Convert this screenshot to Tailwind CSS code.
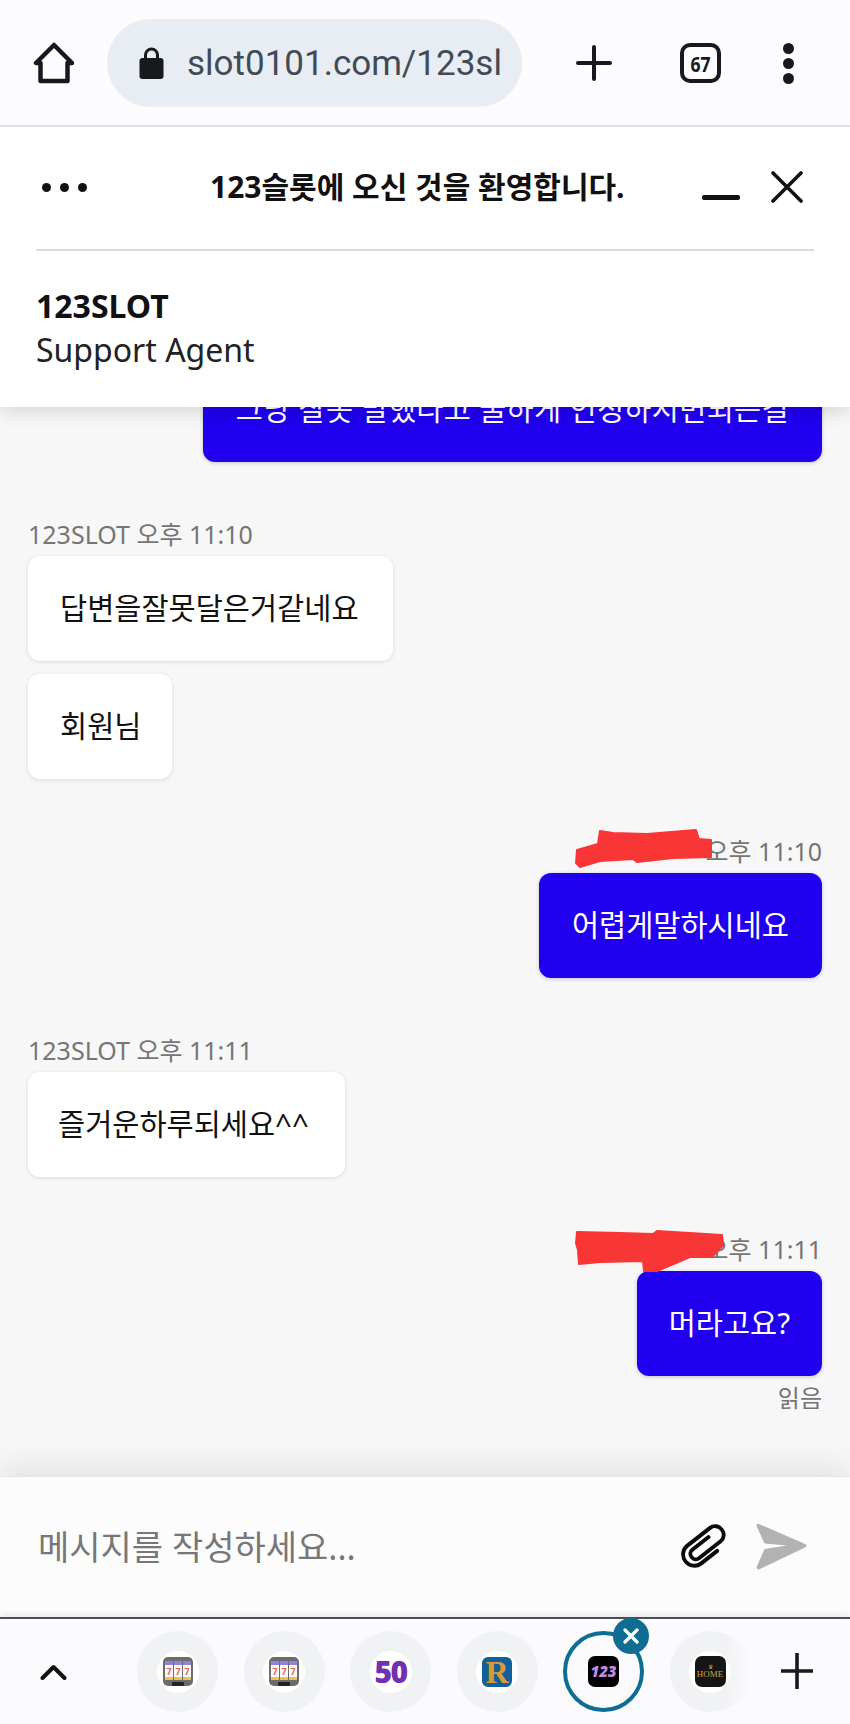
<!DOCTYPE html>
<html lang="ko">
<head>
  <meta charset="utf-8">
  <meta name="viewport" content="width=device-width, initial-scale=1.0">
  <title>123SLOT</title>
  <script src="https://cdn.jsdelivr.net/npm/@tailwindcss/browser@4"></script>
</head>
<body class="font-['Noto_Sans','Noto_Sans_CJK_KR',sans-serif] bg-white">
  <div class="w-[850px] h-[1724px] flex flex-col overflow-hidden text-[#111]">

    <!-- Browser toolbar -->
    <div class="h-[127px] shrink-0 flex items-center bg-[#fcfcfe] border-b-2 border-[#dfe3e8] pl-[33px] pt-[1px] relative z-20">
      <svg class="w-[42px] h-[42px]" viewBox="0 0 42 42" fill="none" stroke="#17191c" stroke-width="4.5" stroke-linejoin="round" stroke-linecap="round">
        <path d="M21 3 L3 21 H7.5 V39 H34.5 V21 H39 Z"/>
      </svg>
      <div class="ml-[32px] w-[415px] h-[88px] rounded-full bg-[#e7edf3] flex items-center pl-[32px] overflow-hidden">
        <svg class="w-[25px] h-[32px] shrink-0" viewBox="0 0 25 32">
          <path d="M6.5 13 V8 a6 6 0 0 1 12 0 V13" fill="none" stroke="#17191c" stroke-width="3"/>
          <rect x="0.5" y="11" width="24" height="21" rx="3" fill="#17191c"/>
        </svg>
        <span class="ml-[23px] font-['Roboto',sans-serif] text-[35px] leading-none text-[#414a55] whitespace-nowrap">slot0101.com/123sl</span>
      </div>
      <svg class="ml-[54px] w-[36px] h-[36px]" viewBox="0 0 36 36" stroke="#17191c" stroke-width="4" stroke-linecap="round"><path d="M18 2 V34 M2 18 H34"/></svg>
      <div class="ml-[68px] w-[41px] h-[40px] rounded-[10px] border-[4px] border-[#17191c] flex items-center justify-center">
        <span class="text-[22px] font-bold leading-none scale-x-80 text-[#17191c]">67</span>
      </div>
      <div class="ml-[62px] flex flex-col gap-[4px]">
        <span class="w-[11px] h-[11px] rounded-full bg-[#17191c]"></span>
        <span class="w-[11px] h-[11px] rounded-full bg-[#17191c]"></span>
        <span class="w-[11px] h-[11px] rounded-full bg-[#17191c]"></span>
      </div>
    </div>

    <!-- Chat header -->
    <div class="h-[280px] shrink-0 bg-white px-[36px] flex flex-col shadow-[0_4px_18px_rgba(0,0,0,0.14)] relative z-10">
      <div class="h-[124px] shrink-0 flex items-center border-b-2 border-[#dcdcdc] pb-[2px]">
        <div class="ml-[6px] flex gap-[9px]">
          <span class="w-[9px] h-[9px] rounded-full bg-[#111]"></span>
          <span class="w-[9px] h-[9px] rounded-full bg-[#111]"></span>
          <span class="w-[9px] h-[9px] rounded-full bg-[#111]"></span>
        </div>
        <div class="ml-[123px] w-[480px] text-[30px] font-bold leading-none whitespace-nowrap">123슬롯에 오신 것을 환영합니다.</div>
        <svg class="ml-[12px] mt-[22px] w-[38px] h-[6px]" viewBox="0 0 38 6"><rect width="38" height="5" rx="2" fill="#111"/></svg>
        <svg class="ml-[31px] w-[32px] h-[32px]" viewBox="0 0 32 32" stroke="#111" stroke-width="3.6" stroke-linecap="round"><path d="M2 2 L30 30 M30 2 L2 30"/></svg>
      </div>
      <div class="mt-[33px] text-[32px] font-bold leading-[44px]">123SLOT</div>
      <div class="text-[32px] leading-[44px] text-[#222]">Support Agent</div>
    </div>

    <!-- Messages -->
    <div class="flex-1 min-h-0 overflow-hidden bg-[#f7f7f8] flex flex-col justify-end pl-[28px] pr-[28px] pb-[62px] text-[29.5px]">
      <div class="self-end shrink-0 h-[105px] rounded-[12px] bg-[#2000ef] text-white px-[33px] flex items-center whitespace-nowrap tracking-[0.3px] shadow-[0_1px_4px_rgba(0,0,0,0.2)]">그냥 잘못 말했다고 쿨하게 인정하시면되는걸</div>

      <div class="mt-[56px] shrink-0 h-[32px] text-[25px] leading-[32px] text-[#757575]">123SLOT 오후 11:10</div>
      <div class="mt-[6px] shrink-0 self-start h-[105px] rounded-[12px] bg-white pl-[32px] pr-[34px] flex items-center shadow-[0_1px_4px_rgba(0,0,0,0.12)]">답변을잘못달은거같네요</div>
      <div class="mt-[13px] shrink-0 self-start h-[105px] rounded-[12px] bg-white pl-[32px] pr-[31px] flex items-center shadow-[0_1px_4px_rgba(0,0,0,0.12)]">회원님</div>

      <div class="mt-[56px] shrink-0 h-[32px] text-[25px] leading-[32px] text-[#757575] text-right relative">
        <svg class="absolute right-[110px] top-[-6px] w-[137px] h-[39px]" viewBox="0 0 137 39"><path fill="#f93636" stroke="#f93636" stroke-width="2" stroke-linejoin="round" d="M2 21 L23 15 L25 2 L38 4 L72 5 L121 1 L124 10 L136 11 L136 28 L98 29 L62 33 L58 30 L25 32 L5 38 L1 34 Z"/></svg>
        오후 11:10
      </div>
      <div class="mt-[6px] shrink-0 self-end h-[105px] rounded-[12px] bg-[#2000ef] text-white px-[33px] flex items-center shadow-[0_1px_4px_rgba(0,0,0,0.2)]">어렵게말하시네요</div>

      <div class="mt-[56px] shrink-0 h-[32px] text-[25px] leading-[32px] text-[#757575]">123SLOT 오후 11:11</div>
      <div class="mt-[6px] shrink-0 self-start h-[105px] rounded-[12px] bg-white pl-[30px] pr-[36px] flex items-center shadow-[0_1px_4px_rgba(0,0,0,0.12)]">즐거운하루되세요^^</div>

      <div class="mt-[56px] shrink-0 h-[32px] text-[25px] leading-[32px] text-[#757575] text-right relative">
        <svg class="absolute right-[97px] top-[-3px] w-[150px] h-[43px]" viewBox="0 0 150 43"><path fill="#f93636" stroke="#f93636" stroke-width="2" stroke-linejoin="round" d="M2 2 L45 3 L78 4 L82 1 L147 5 L148 15 L137 27 L115 27 L82 41 L69 41 L68 31 L25 32 L4 34 L3 20 L1 13 Z"/></svg>
        오후 11:11
      </div>
      <div class="mt-[6px] shrink-0 self-end h-[105px] rounded-[12px] bg-[#2000ef] text-white px-[32px] flex items-center shadow-[0_1px_4px_rgba(0,0,0,0.2)]">머라고요?</div>
      <div class="mt-[6px] shrink-0 h-[32px] text-[24px] leading-[32px] text-[#757575] text-right">읽음</div>
    </div>

    <!-- Input -->
    <div class="h-[141px] shrink-0 bg-[#fcfcfd] border-t border-[#e6e6e6] flex items-center pl-[38px] shadow-[0_-12px_26px_rgba(0,0,0,0.07)] relative">
      <span class="w-[642px] text-[34px] leading-none text-[#777]">메시지를 작성하세요...</span>
      <svg class="w-[50px] h-[46px] overflow-visible" viewBox="0 0 50 46" fill="none" stroke="#0c0c0c" stroke-width="4.4" stroke-linecap="round">
        <path transform="rotate(52 24.500 22.500) translate(24.500 22.500) scale(0.9 0.86) translate(-24.500 -22.500)" d="M19 12 V36 a6 6 0 0 0 12 0 V4 a9.500 9.500 0 0 0 -19 0 V38 a12.500 12.500 0 0 0 25 0 V14"/>
      </svg>
      <svg class="ml-[26px] w-[52px] h-[48px]" viewBox="0 0 52 48"><path fill="#b2b2b2" d="M3 1 C1 0 0 2 1 4 L8.500 20.500 L31 22.500 L8.500 26 L1 43 C0 46 2 47 4 46 L49 24.500 C51 23.500 51 22 49 21 Z"/></svg>
    </div>

    <!-- Chrome tab strip -->
    <div class="h-[107px] shrink-0 bg-[#fbfbfe] border-t-2 border-[#4a4f57] flex items-center relative shadow-[0_-3px_6px_rgba(0,0,0,0.08)]">
      <svg class="ml-[40px] w-[27px] h-[16px] shrink-0" viewBox="0 0 27 16" fill="none" stroke="#111" stroke-width="4" stroke-linecap="round" stroke-linejoin="round"><path d="M2.500 14 L13.500 3 L24.500 14"/></svg>

      <div class="ml-[70px] flex gap-[25.500px]">
        <div class="w-[81px] h-[81px] rounded-full bg-[#f1f2f4] flex items-center justify-center">
          <div class="w-[42px] h-[42px] rounded-full bg-white flex items-center justify-center">
            <svg class="w-[32px] h-[32px]" viewBox="0 0 32 32">
              <rect x="1" y="1" width="30" height="29" rx="5" fill="#6c6c6c"/>
              <rect x="3" y="5" width="8" height="19" fill="#fafafa"/><rect x="12" y="5" width="8" height="19" fill="#fafafa"/><rect x="21" y="5" width="8" height="19" fill="#fafafa"/>
              <rect x="3" y="5" width="8" height="4" fill="#8f83d6"/><rect x="12" y="5" width="8" height="4" fill="#8f83d6"/><rect x="21" y="5" width="8" height="4" fill="#8f83d6"/>
              <rect x="3" y="21" width="8" height="3" fill="#f0c14a"/><rect x="12" y="21" width="8" height="3" fill="#f0c14a"/><rect x="21" y="21" width="8" height="3" fill="#f0c14a"/>
              <text x="7" y="19" text-anchor="middle" font-size="9" font-weight="700" fill="#d9604a" font-family="Roboto">7</text>
              <text x="16" y="19" text-anchor="middle" font-size="9" font-weight="700" fill="#d9604a" font-family="Roboto">7</text>
              <text x="25" y="19" text-anchor="middle" font-size="9" font-weight="700" fill="#d9604a" font-family="Roboto">7</text>
              <rect x="10" y="26" width="12" height="4" rx="1" fill="#222"/>
            </svg>
          </div>
        </div>
        <div class="w-[81px] h-[81px] rounded-full bg-[#f1f2f4] flex items-center justify-center">
          <div class="w-[42px] h-[42px] rounded-full bg-white flex items-center justify-center">
            <svg class="w-[32px] h-[32px]" viewBox="0 0 32 32">
              <rect x="1" y="1" width="30" height="29" rx="5" fill="#6c6c6c"/>
              <rect x="3" y="5" width="8" height="19" fill="#fafafa"/><rect x="12" y="5" width="8" height="19" fill="#fafafa"/><rect x="21" y="5" width="8" height="19" fill="#fafafa"/>
              <rect x="3" y="5" width="8" height="4" fill="#8f83d6"/><rect x="12" y="5" width="8" height="4" fill="#8f83d6"/><rect x="21" y="5" width="8" height="4" fill="#8f83d6"/>
              <rect x="3" y="21" width="8" height="3" fill="#f0c14a"/><rect x="12" y="21" width="8" height="3" fill="#f0c14a"/><rect x="21" y="21" width="8" height="3" fill="#f0c14a"/>
              <text x="7" y="19" text-anchor="middle" font-size="9" font-weight="700" fill="#d9604a" font-family="Roboto">7</text>
              <text x="16" y="19" text-anchor="middle" font-size="9" font-weight="700" fill="#d9604a" font-family="Roboto">7</text>
              <text x="25" y="19" text-anchor="middle" font-size="9" font-weight="700" fill="#d9604a" font-family="Roboto">7</text>
              <rect x="10" y="26" width="12" height="4" rx="1" fill="#222"/>
            </svg>
          </div>
        </div>
        <div class="w-[81px] h-[81px] rounded-full bg-[#f1f2f4] flex items-center justify-center">
          <div class="w-[42px] h-[42px] rounded-full bg-white flex items-center justify-center">
            <span class="text-[30px] font-black leading-none tracking-[-1.5px] text-[#7330b0]">50</span>
          </div>
        </div>
        <div class="w-[81px] h-[81px] rounded-full bg-[#f1f2f4] flex items-center justify-center">
          <div class="w-[42px] h-[42px] rounded-full bg-white flex items-center justify-center">
            <div class="w-[30px] h-[30px] rounded-[6px] bg-[#125f9c] flex items-center justify-center">
              <span class="text-[32px] font-black leading-none font-['Liberation_Serif',serif] text-[#d99a35]">R</span>
            </div>
          </div>
        </div>
        <div class="w-[81px] h-[81px] rounded-full border-[4px] border-[#0e6d90] bg-[#fbfbfe] flex items-center justify-center relative">
          <div class="w-[31px] h-[31px] rounded-[7px] bg-black flex items-center justify-center">
            <span class="text-[15px] font-black italic leading-none text-[#c58be8]">123</span>
          </div>
          <div class="absolute top-[-17px] right-[-9px] w-[36px] h-[36px] rounded-full bg-[#0e6d90] flex items-center justify-center">
            <svg class="w-[16px] h-[16px]" viewBox="0 0 16 16" stroke="#fff" stroke-width="3.2" stroke-linecap="round"><path d="M2 2 L14 14 M14 2 L2 14"/></svg>
          </div>
        </div>
        <div class="w-[81px] h-[81px] rounded-full bg-[#f1f2f4] flex items-center justify-center">
          <div class="w-[42px] h-[42px] rounded-full bg-white flex items-center justify-center">
            <div class="w-[31px] h-[31px] rounded-[7px] bg-[#151515] flex flex-col items-center justify-center">
              <span class="text-[6px] leading-none text-[#c9a24d]">♛</span>
              <span class="text-[9px] leading-none font-['Liberation_Serif',serif] text-[#c9a24d]">HOME</span>
            </div>
          </div>
        </div>
      </div>
      <div class="absolute left-[725px] top-0 bottom-0 w-[28px] bg-linear-to-r from-[#fbfbfe]/0 to-[#fbfbfe]"></div>
      <svg class="absolute left-[781px] top-[34px] w-[32px] h-[36px]" viewBox="0 0 32 36" stroke="#17191c" stroke-width="3.6"><path d="M16 0 V36 M0 18 H32"/></svg>
    </div>
  </div>
</body>
</html>
